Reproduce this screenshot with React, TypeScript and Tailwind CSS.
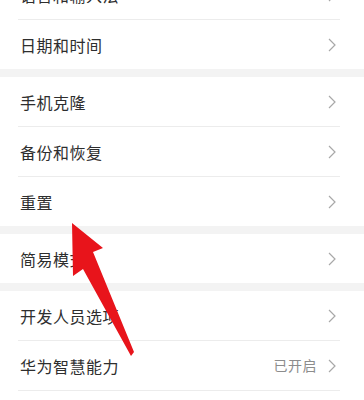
type Item = { label: string; value?: string };

const GROUPS: Item[][] = [
  [{ label: "语言和输入法" }, { label: "日期和时间" }],
  [{ label: "手机克隆" }, { label: "备份和恢复" }, { label: "重置" }],
  [{ label: "简易模式" }],
  [{ label: "开发人员选项" }, { label: "华为智慧能力", value: "已开启" }, { label: "" }],
];

function Chevron() {
  return (
    <svg width="8" height="14" viewBox="0 0 8 14" className="text-[#a8a8a8]">
      <polyline points="1,1 7,7 1,13" fill="none" stroke="currentColor" strokeWidth="1.2" />
    </svg>
  );
}

function Row({ item }: { item: Item }) {
  return (
    <div className="h-[49px] flex items-center pl-5 pr-[28px]">
      <span className="flex-1 text-[16px] text-[#2e2e2e] tracking-[0.5px]">{item.label}</span>
      {item.value && <span className="text-[14px] text-[#8c8c8c] mr-[11px] tracking-[0.5px]">{item.value}</span>}
      {item.label && <Chevron />}
    </div>
  );
}

export default function App() {
  return (
    <div
      className="relative w-[364px] h-[400px] overflow-hidden bg-[#f3f3f3]"
      style={{ fontFamily: '"Noto Sans CJK SC", "Noto Sans", sans-serif' }}
    >
      <div className="-mt-[30px] flex flex-col gap-2">
        {GROUPS.map((group, gi) => (
          <div key={gi} className="bg-white">
            {group.map((item, i) => (
              <div key={i}>
                {i > 0 && <div className="h-px bg-[#ececec] ml-[18px] mr-[24px]" />}
                <Row item={item} />
              </div>
            ))}
          </div>
        ))}
      </div>

      <svg className="absolute inset-0 pointer-events-none" width="364" height="400" viewBox="0 0 364 400">
        <polygon
          points="72,223 103,248 93,252 134,352 131,356 83,269 73,276"
          fill="#e8141b"
        />
      </svg>
    </div>
  );
}
